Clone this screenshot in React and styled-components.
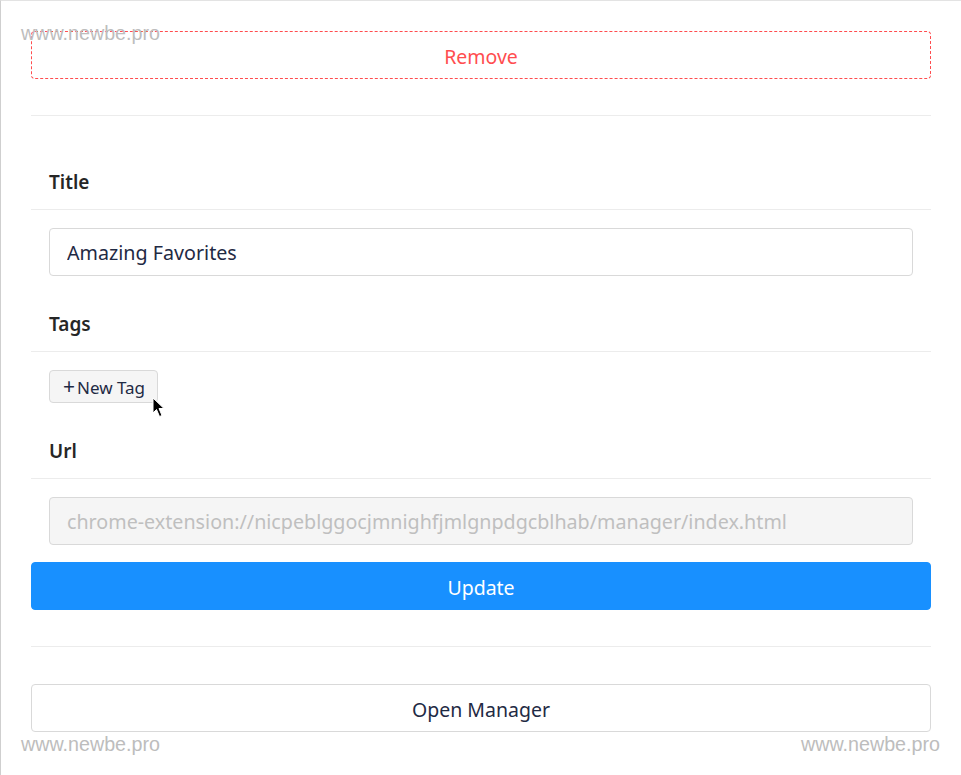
import React from 'react';
import styled, { createGlobalStyle } from 'styled-components';

const Global = createGlobalStyle`
    html, body {
        margin: 0;
        padding: 0;
        background: #fff;
    }
    body {
        font-family: "Noto Sans", "Open Sans", sans-serif;
        color: #262626;
    }
`;

const Page = styled.div`
    position: relative;
    box-sizing: border-box;
    width: 961px;
    height: 775px;
    padding: 30px 30px 0 30px;
    border-top: 1px solid #e3e3e3;
    border-left: 1px solid #cfcfcf;
    overflow: hidden;
`;

const Button = styled.button`
    display: block;
    box-sizing: border-box;
    width: 100%;
    height: 48px;
    padding: 2px 0 0;
    font-family: inherit;
    font-size: 19.5px;
    border-radius: 4px;
    cursor: pointer;
    color: ${p => p.$color || '#1f2a44'};
    background: ${p => p.$bg || '#fff'};
    border: 1px ${p => p.$dashed ? 'dashed' : 'solid'} ${p => p.$border || '#d9d9d9'};
`;

const Divider = styled.hr`
    border: 0;
    border-top: 1px solid #ececec;
    margin: 36px 0 ${p => p.$after || 36}px;
`;

const Header = styled.div`
    padding: 18px 18px 14px;
    font-size: 19px;
    font-weight: 600;
    line-height: 25px;
    border-bottom: 1px solid #ececec;
`;

const Body = styled.div`
    position: relative;
    padding: 18px 18px ${p => p.$bottom || 18}px;
`;

const Input = styled.input`
    display: block;
    box-sizing: border-box;
    width: 100%;
    height: 48px;
    padding: 1px 17px 0;
    font-family: inherit;
    font-size: 19.7px;
    color: ${p => p.disabled ? '#bfbfbf' : '#1f2a44'};
    background: ${p => p.disabled ? '#f5f5f5' : '#fff'};
    border: 1px solid #d9d9d9;
    border-radius: 4px;
    outline: none;
`;

const TagButton = styled.button`
    display: inline-flex;
    align-items: center;
    box-sizing: border-box;
    height: 33px;
    padding: 2px 12px 0 13px;
    font-family: inherit;
    font-size: 17px;
    color: #1f2a44;
    background: #f5f5f5;
    border: 1px solid #d9d9d9;
    border-radius: 4px;
`;

const Plus = styled.span`
    font-size: 21px;
    line-height: 1;
    margin-right: 2px;
    margin-top: -3px;
`;

const Cursor = styled.svg`
    position: absolute;
    left: 121px;
    top: 45px;
`;

const Watermark = styled.span`
    position: absolute;
    left: ${p => p.$left}px;
    top: ${p => p.$top}px;
    font-family: "Liberation Sans", Arial, sans-serif;
    font-size: 19.7px;
    color: #bdbdbd;
    pointer-events: none;
`;

export default function App() {
    return (
        <Page>
            <Global />
            <Button $dashed $border="#ff4d4f" $color="#ff4d4f">Remove</Button>
            <Divider />

            <Header>Title</Header>
            <Body>
                <Input defaultValue="Amazing Favorites" />
            </Body>

            <Header>Tags</Header>
            <Body>
                <TagButton><Plus>+</Plus>New Tag</TagButton>
                <Cursor width="14" height="22" viewBox="0 0 14 22">
                    <path d="M1 1 L1 16 L4.5 12.5 L7.5 19.5 L10 18.5 L7 11.5 L12 11.5 Z" fill="#000" stroke="#fff" strokeWidth="1" />
                </Cursor>
            </Body>

            <Header>Url</Header>
            <Body $bottom={17}>
                <Input disabled value="chrome-extension://nicpeblggocjmnighfjmlgnpdgcblhab/manager/index.html" readOnly />
            </Body>

            <Button $bg="#1890ff" $border="#1890ff" $color="#fff">Update</Button>
            <Divider $after={37} />
            <Button>Open Manager</Button>

            <Watermark $left={20} $top={21}>www.newbe.pro</Watermark>
            <Watermark $left={20} $top={732}>www.newbe.pro</Watermark>
            <Watermark $left={800} $top={732}>www.newbe.pro</Watermark>
        </Page>
    );
}
